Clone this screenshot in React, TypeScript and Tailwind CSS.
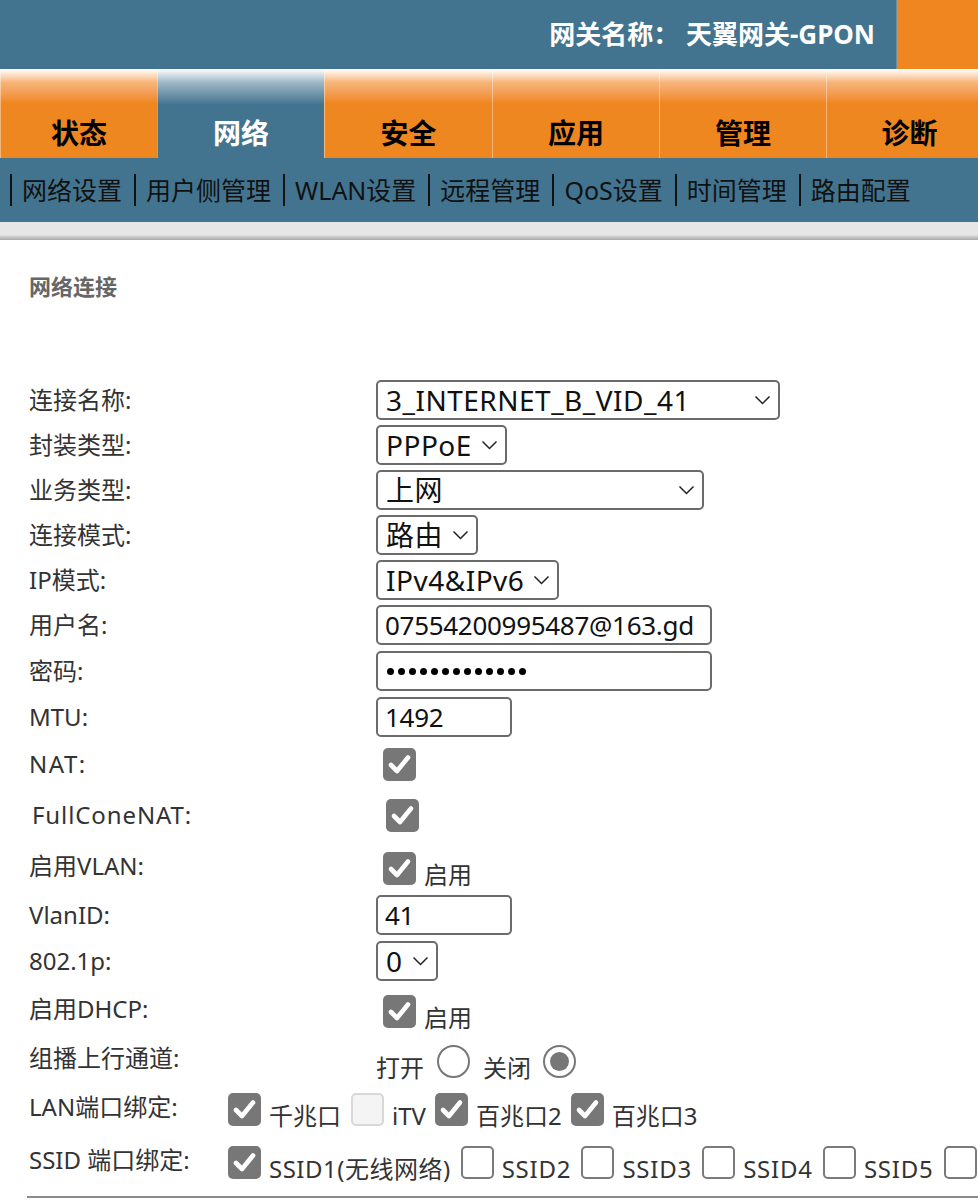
import React from 'react';

const font = { fontFamily: '"Noto Sans", "Noto Sans CJK SC", sans-serif' };

const tabs = [
  { label: '状态', w: 'w-[157px]' },
  { label: '网络', w: 'w-[167px]', active: true },
  { label: '安全', w: 'w-[168px]' },
  { label: '应用', w: 'w-[167px]' },
  { label: '管理', w: 'w-[167px]' },
  { label: '诊断', w: 'w-[166px]' },
];

const subnav = ['网络设置', '用户侧管理', 'WLAN设置', '远程管理', 'QoS设置', '时间管理', '路由配置'];

function Chevron() {
  return (
    <svg width="17" height="10" viewBox="0 0 17 10" className="shrink-0">
      <polyline points="1.5,1.5 8.5,8.5 15.5,1.5" fill="none" stroke="#222" strokeWidth="1.5" />
    </svg>
  );
}

function Select({ value, w, fit }: { value: string; w?: string; fit?: boolean }) {
  return (
    <div
      className={`flex h-[40px] items-center rounded-[5px] border-2 border-[#6b6b6b] bg-white pl-[8px] pr-[7px] text-[28px] tracking-[0.5px] text-[#111] ${
        fit ? 'gap-[9px]' : `justify-between ${w}`
      }`}
    >
      <span className="leading-none">{value}</span>
      <Chevron />
    </div>
  );
}

function Input({ value, w, password }: { value: string; w: string; password?: boolean }) {
  return (
    <div className={`flex h-[40px] items-center rounded-[5px] border-2 border-[#6b6b6b] bg-white pl-[7px] text-[26px] tracking-[-0.3px] text-[#111] ${w}`}>
      {password ? (
        <span className="flex gap-[4px] pl-[2px]">
          {Array.from({ length: 13 }).map((_, i) => (
            <span key={i} className="block h-[7px] w-[7px] rounded-full bg-black" />
          ))}
        </span>
      ) : (
        <span className="leading-none">{value}</span>
      )}
    </div>
  );
}

function Check({ on = true, disabled }: { on?: boolean; disabled?: boolean }) {
  if (disabled) {
    return <span className="block h-[33px] w-[33px] shrink-0 rounded-[5px] border-2 border-[#d8d8d8] bg-[#f4f4f4]" />;
  }
  if (!on) {
    return <span className="block h-[33px] w-[33px] shrink-0 rounded-[5px] border-2 border-[#7a7a7a] bg-white" />;
  }
  return (
    <span className="flex h-[33px] w-[33px] shrink-0 items-center justify-center rounded-[5px] bg-[#777]">
      <svg width="33" height="33" viewBox="0 0 33 33">
        <polyline points="8,17 14,23 25,9.5" fill="none" stroke="#fff" strokeWidth="4.6" strokeLinecap="round" strokeLinejoin="round" />
      </svg>
    </span>
  );
}

function Radio({ on }: { on?: boolean }) {
  return (
    <span className="flex h-[33px] w-[33px] shrink-0 items-center justify-center rounded-full border-[2.5px] border-[#777] bg-white">
      {on && <span className="block h-[19px] w-[19px] rounded-full bg-[#777]" />}
    </span>
  );
}

function Row({ label, h, children, labelW = 'w-[347px]', labelClass = '' }: {
  label: string; h: string; children?: React.ReactNode; labelW?: string; labelClass?: string;
}) {
  return (
    <div className={`flex items-center ${h}`}>
      <div className={`${labelW} shrink-0 text-[24px] leading-[30px] text-[#333] ${labelClass}`}>{label}</div>
      {children}
    </div>
  );
}

// text that sits a little below the box it follows
function After({ children, className = '' }: { children: React.ReactNode; className?: string }) {
  return <span className={`-mb-[4px] ${className}`}>{children}</span>;
}

export default function App() {
  return (
    <div className="h-[1201px] w-[978px] overflow-hidden bg-white" style={font}>
      {/* header */}
      <div className="flex h-[69px]">
        <div className="flex flex-1 items-center justify-end bg-[#43748f] pr-[21px] text-[26px] font-bold text-white">
          网关名称：&nbsp;天翼网关-GPON
        </div>
        <div className="w-[82px] border-l border-[#6d8fa3] bg-[#ef861f]" />
      </div>

      {/* tabs */}
      <div className="flex h-[89px] bg-[#43748f]">
        {tabs.map((t) => (
          <div
            key={t.label}
            className={`flex shrink-0 items-end justify-center border-l border-white/40 pb-[4px] text-[28px] font-bold ${t.w} ${
              t.active
                ? 'bg-linear-to-b from-white from-0% via-[#9fb8c7] via-15% to-[#43748f] to-40% text-white'
                : 'bg-linear-to-b from-white from-0% via-[#f6b57a] via-15% to-[#ef8720] to-38% text-black'
            }`}
          >
            {t.label}
          </div>
        ))}
      </div>

      {/* sub navigation */}
      <div className="flex h-[64px] items-center bg-[#43748f] pl-[10px] text-[25px] text-[#111]">
        {subnav.map((s) => (
          <span key={s} className="border-l-2 border-[#111] pl-[10px] pr-[12px] leading-[32px]">
            {s}
          </span>
        ))}
      </div>
      <div className="h-[18px] bg-linear-to-b from-[#e6e6e6] from-70% to-[#a8a8a8]" />

      {/* content */}
      <div className="pl-[29px]">
        <div className="pt-[31px] text-[22px] font-bold leading-[30px] text-[#666]">网络连接</div>

        <div className="mt-[76px]">
          <Row label="连接名称:" h="h-[45px]"><Select value="3_INTERNET_B_VID_41" w="w-[404px]" /></Row>
          <Row label="封装类型:" h="h-[45px]"><Select value="PPPoE" fit /></Row>
          <Row label="业务类型:" h="h-[45px]"><Select value="上网" w="w-[328px]" /></Row>
          <Row label="连接模式:" h="h-[45px]"><Select value="路由" fit /></Row>
          <Row label="IP模式:" h="h-[45px]"><Select value="IPv4&IPv6" fit /></Row>
          <Row label="用户名:" h="h-[46px]"><Input value="07554200995487@163.gd" w="w-[336px]" /></Row>
          <Row label="密码:" h="h-[46px]"><Input value="" password w="w-[336px]" /></Row>
          <Row label="MTU:" h="h-[45px]"><Input value="1492" w="w-[136px]" /></Row>
          <Row label="NAT:" h="h-[50px]" labelClass="tracking-[1.5px]"><span className="pl-[7px]"><Check /></span></Row>
          <Row label="FullConeNAT:" h="h-[52px]" labelClass="pl-[3px] tracking-[0.9px]"><span className="pl-[10px]"><Check /></span></Row>
          <Row label="启用VLAN:" h="h-[50px]">
            <span className="flex items-end gap-[8px] pl-[7px] pt-[4px] text-[24px] leading-[28px] text-[#333]">
              <Check />
              <After>启用</After>
            </span>
          </Row>
          <Row label="VlanID:" h="h-[47px]"><Input value="41" w="w-[136px]" /></Row>
          <Row label="802.1p:" h="h-[45px]"><Select value="0" fit /></Row>
          <Row label="启用DHCP:" h="h-[52px]">
            <span className="flex items-end gap-[8px] pl-[7px] pt-[4px] text-[24px] leading-[28px] text-[#333]">
              <Check />
              <After>启用</After>
            </span>
          </Row>
          <Row label="组播上行通道:" h="h-[46px]">
            <span className="flex items-end gap-[13px] pt-[6px] text-[24px] leading-[28px] text-[#333]">
              <After>打开</After>
              <Radio />
              <After>关闭</After>
              <span className="-ml-[1px]"><Radio on /></span>
            </span>
          </Row>
          <Row label="LAN端口绑定:" h="h-[52px]" labelW="w-[199px]">
            <span className="flex items-end gap-[8px] pt-[4px] text-[24px] leading-[28px] text-[#333]">
              <Check />
              <After className="mr-[2px]">千兆口</After>
              <Check disabled />
              <After className="mr-[1px]">iTV</After>
              <Check />
              <After className="mr-[1px]">百兆口2</After>
              <Check />
              <After>百兆口3</After>
            </span>
          </Row>
          <Row label="SSID 端口绑定:" h="h-[54px]" labelW="w-[199px]">
            <span className="flex items-end gap-[8px] pt-[4px] text-[24px] leading-[28px] text-[#333] whitespace-nowrap">
              <Check />
              <After className="mr-[2px] tracking-[0.5px]">SSID1(无线网络)</After>
              <Check on={false} />
              <After className="mr-[2px] tracking-[0.8px]">SSID2</After>
              <Check on={false} />
              <After className="mr-[2px] tracking-[0.8px]">SSID3</After>
              <Check on={false} />
              <After className="mr-[2px] tracking-[0.8px]">SSID4</After>
              <Check on={false} />
              <After className="mr-[2px] tracking-[0.8px]">SSID5</After>
              <Check on={false} />
            </span>
          </Row>
        </div>
        <div className="-ml-[2px] mt-[9px] h-[2px] bg-[#8c8c8c]" />
      </div>
    </div>
  );
}
